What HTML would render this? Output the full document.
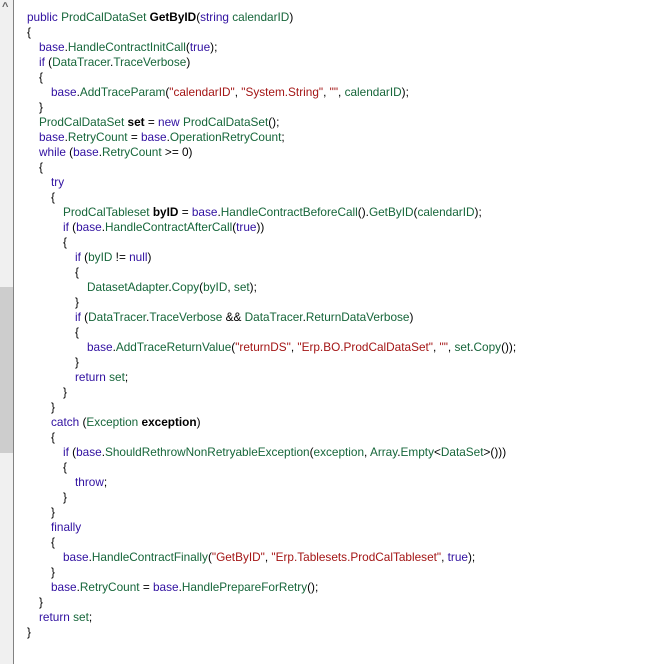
<!DOCTYPE html>
<html><head><meta charset="utf-8"><style>
html,body{margin:0;padding:0;background:#fff;width:661px;height:664px;overflow:hidden;}
.sb{position:absolute;left:0;top:0;width:13px;height:664px;background:#f0f0f0;border-right:1px solid #828282;}
.th{position:absolute;left:0;top:287px;width:13px;height:166px;background:#cdcdcd;}
.ar{position:absolute;left:2px;top:1px;font:bold 11px "Liberation Sans",sans-serif;color:#606060;}
.code{position:absolute;left:27px;top:10px;font:11.8px "Liberation Sans",sans-serif;line-height:15px;color:#000;}
.code div{height:15px;white-space:pre}
.a{padding-left:12px}.b{padding-left:24px}.c{padding-left:36px}.d{padding-left:48px}.e{padding-left:60px}
.k{color:#3010a0}.g{color:#16663a}.s{color:#a31515}b{font-weight:bold;color:#000}
</style></head><body>
<div class="sb"><div class="th"></div><div class="ar">^</div></div>
<div class="code"><div><span class="k">public</span> <span class="g">ProdCalDataSet</span> <b>GetByID</b>(<span class="k">string</span> <span class="g">calendarID</span>)</div><div>{</div><div class="a"><span class="k">base</span>.<span class="g">HandleContractInitCall</span>(<span class="k">true</span>);</div><div class="a"><span class="k">if</span> (<span class="g">DataTracer</span>.<span class="g">TraceVerbose</span>)</div><div class="a">{</div><div class="b"><span class="k">base</span>.<span class="g">AddTraceParam</span>(<span class="s">"calendarID"</span>, <span class="s">"System.String"</span>, <span class="s">""</span>, <span class="g">calendarID</span>);</div><div class="a">}</div><div class="a"><span class="g">ProdCalDataSet</span> <b>set</b> = <span class="k">new</span> <span class="g">ProdCalDataSet</span>();</div><div class="a"><span class="k">base</span>.<span class="g">RetryCount</span> = <span class="k">base</span>.<span class="g">OperationRetryCount</span>;</div><div class="a"><span class="k">while</span> (<span class="k">base</span>.<span class="g">RetryCount</span> &gt;= 0)</div><div class="a">{</div><div class="b"><span class="k">try</span></div><div class="b">{</div><div class="c"><span class="g">ProdCalTableset</span> <b>byID</b> = <span class="k">base</span>.<span class="g">HandleContractBeforeCall</span>().<span class="g">GetByID</span>(<span class="g">calendarID</span>);</div><div class="c"><span class="k">if</span> (<span class="k">base</span>.<span class="g">HandleContractAfterCall</span>(<span class="k">true</span>))</div><div class="c">{</div><div class="d"><span class="k">if</span> (<span class="g">byID</span> != <span class="k">null</span>)</div><div class="d">{</div><div class="e"><span class="g">DatasetAdapter</span>.<span class="g">Copy</span>(<span class="g">byID</span>, <span class="g">set</span>);</div><div class="d">}</div><div class="d"><span class="k">if</span> (<span class="g">DataTracer</span>.<span class="g">TraceVerbose</span> &amp;&amp; <span class="g">DataTracer</span>.<span class="g">ReturnDataVerbose</span>)</div><div class="d">{</div><div class="e"><span class="k">base</span>.<span class="g">AddTraceReturnValue</span>(<span class="s">"returnDS"</span>, <span class="s">"Erp.BO.ProdCalDataSet"</span>, <span class="s">""</span>, <span class="g">set</span>.<span class="g">Copy</span>());</div><div class="d">}</div><div class="d"><span class="k">return</span> <span class="g">set</span>;</div><div class="c">}</div><div class="b">}</div><div class="b"><span class="k">catch</span> (<span class="g">Exception</span> <b>exception</b>)</div><div class="b">{</div><div class="c"><span class="k">if</span> (<span class="k">base</span>.<span class="g">ShouldRethrowNonRetryableException</span>(<span class="g">exception</span>, <span class="g">Array</span>.<span class="g">Empty</span>&lt;<span class="g">DataSet</span>&gt;()))</div><div class="c">{</div><div class="d"><span class="k">throw</span>;</div><div class="c">}</div><div class="b">}</div><div class="b"><span class="k">finally</span></div><div class="b">{</div><div class="c"><span class="k">base</span>.<span class="g">HandleContractFinally</span>(<span class="s">"GetByID"</span>, <span class="s">"Erp.Tablesets.ProdCalTableset"</span>, <span class="k">true</span>);</div><div class="b">}</div><div class="b"><span class="k">base</span>.<span class="g">RetryCount</span> = <span class="k">base</span>.<span class="g">HandlePrepareForRetry</span>();</div><div class="a">}</div><div class="a"><span class="k">return</span> <span class="g">set</span>;</div><div>}</div></div>
</body></html>
